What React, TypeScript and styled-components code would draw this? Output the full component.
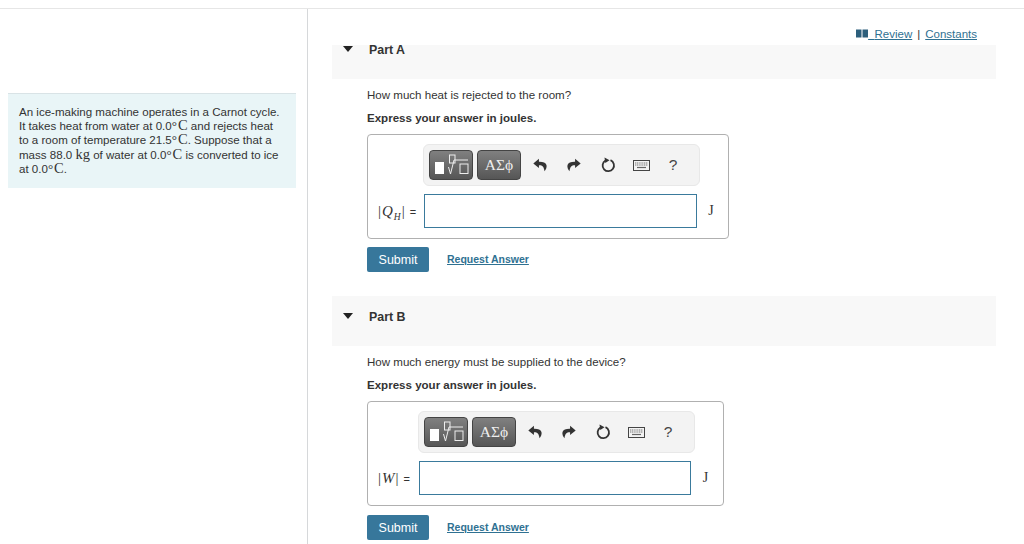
import React from 'react';
import styled, { createGlobalStyle } from 'styled-components';

const GlobalStyle = createGlobalStyle`
    html, body {
        margin: 0;
        padding: 0;
        background: #fff;
        overflow: hidden;
    }
    body {
        font-family: "Liberation Sans", Arial, sans-serif;
        color: #333;
    }
`;

const Page = styled.div`
    width: 1024px;
    height: 544px;
    overflow: hidden;
    display: flex;
    flex-direction: column;
`;
const TopStrip = styled.div`
    height: 8px;
    flex: none;
    border-bottom: 1px solid #e6e6e6;
`;
const Columns = styled.div`
    display: flex;
    flex: 1;
    min-height: 0;
`;

/////////////////////

const LeftColumn = styled.div`
    width: 299px;
    flex: none;
    padding: 84px 0 0 8px;
    border-right: 1px solid #d6d8da;
`;
const InfoPanel = styled.div`
    width: 288px;
    height: 95px;
    box-sizing: border-box;
    padding: 11px 11px 0;
    background: #e9f5f7;
    border-top: 1px solid #d9e3e6;
    font-size: 11.55px;
    line-height: 14.2px;
    color: #333;
`;
const MathText = styled.span`
    font-family: "Liberation Serif", "DejaVu Serif", serif;
    font-size: 14.5px;
    line-height: 0;
`;
const Degree = styled.span`
    font-family: "Liberation Serif", "DejaVu Serif", serif;
    font-size: 13px;
    line-height: 0;
    margin-right: 1px;
`;

/////////////////////

const RightColumn = styled.div`
    width: 664px;
    flex: none;
    margin-left: 24px;
`;
const TopLinks = styled.div`
    height: 36px;
    display: flex;
    justify-content: flex-end;
    align-items: center;
    padding: 14px 19px 0 0;
    box-sizing: border-box;
    font-size: 11.5px;
    color: #333;
    gap: 5px;
`;
const TopLink = styled.a`
    color: #2f7192;
    text-decoration: underline;
    white-space: pre;
`;
const PartHeader = styled.div<{ $height: number; $pad: number }>`
    height: ${p => p.$height}px;
    box-sizing: border-box;
    background: #f8f8f8;
    display: flex;
    align-items: flex-start;
    padding: ${p => p.$pad}px 0 0 11px;
    gap: 16px;
    font-size: 12.4px;
    font-weight: bold;
    line-height: 10px;
    color: #333;
`;
const Caret = styled.span`
    width: 0;
    height: 0;
    margin-top: 1px;
    border-left: 5.5px solid transparent;
    border-right: 5.5px solid transparent;
    border-top: 6px solid #222;
`;
const PartBody = styled.div<{ $bottom: number }>`
    padding: 9px 0 ${p => p.$bottom}px 35px;
`;
const Question = styled.div`
    font-size: 11.55px;
    line-height: 14px;
    color: #333;
    margin-bottom: 9px;
`;
const Instruction = styled.div`
    font-size: 11.55px;
    font-weight: bold;
    line-height: 14px;
    color: #333;
    margin-bottom: 9px;
`;
const AnswerBox = styled.div<{ $width: number; $labelWidth: number; $inputWidth: number }>`
    width: ${p => p.$width}px;
    height: 105px;
    box-sizing: border-box;
    border: 1px solid #b0b0b0;
    border-radius: 4px;
    padding: 9px 0 0 10px;
    display: grid;
    grid-template-columns: ${p => p.$labelWidth}px ${p => p.$inputWidth}px 1fr;
    grid-template-rows: 42px 34px;
    row-gap: 8px;
    align-items: center;
`;
const Toolbar = styled.div`
    grid-column: 2 / 4;
    grid-row: 1;
    width: 277px;
    height: 42px;
    box-sizing: border-box;
    margin-left: -1px;
    padding: 5px 0 0 5px;
    background: #f3f3f3;
    border: 1px solid #e8e8e8;
    border-radius: 6px;
    display: flex;
    align-items: flex-start;
`;
const PaletteButton = styled.div`
    width: 44px;
    height: 30px;
    box-sizing: border-box;
    margin-right: 4px;
    border: 1px solid #444;
    border-radius: 4px;
    background: linear-gradient(#808080, #565656);
    color: #eee;
    display: flex;
    align-items: center;
    justify-content: center;
    font-family: "Liberation Serif", "DejaVu Serif", serif;
    font-size: 15.5px;
`;
const ToolIcon = styled.div<{ $width: number }>`
    width: ${p => p.$width}px;
    height: 30px;
    flex: none;
    display: flex;
    align-items: center;
    justify-content: center;
    font-size: 15.5px;
    color: #444;
`;
const AnswerLabel = styled.div`
    grid-column: 1;
    grid-row: 2;
    display: flex;
    align-items: baseline;
    font-size: 11px;
    color: #333;
`;
const LabelMath = styled.span`
    font-family: "Liberation Serif", "DejaVu Serif", serif;
    font-size: 15px;
    letter-spacing: 1px;
    margin-right: 4px;
`;
const MathVar = styled.i`
    font-family: "Liberation Serif", "DejaVu Serif", serif;
`;
const MathSub = styled.sub`
    font-size: 9.5px;
    line-height: 0;
    font-style: italic;
`;
const AnswerInput = styled.input`
    grid-column: 2;
    grid-row: 2;
    width: 100%;
    height: 34px;
    box-sizing: border-box;
    border: 1px solid #3a7a9c;
    background: #fff;
    padding: 0;
    outline: none;
`;
const Unit = styled.div`
    grid-column: 3;
    grid-row: 2;
    text-align: center;
    padding-right: 3px;
    font-family: "Liberation Serif", "DejaVu Serif", serif;
    font-size: 14px;
    color: #333;
`;
const ActionRow = styled.div<{ $top: number }>`
    display: flex;
    align-items: center;
    gap: 18px;
    margin-top: ${p => p.$top}px;
`;
const SubmitButton = styled.button`
    width: 62px;
    height: 25px;
    border: 0;
    border-radius: 2px;
    padding: 0;
    background: #37779b;
    color: #fff;
    font-family: "Liberation Sans", Arial, sans-serif;
    font-size: 12.5px;
`;
const RequestLink = styled.a`
    color: #2f7192;
    font-size: 10.5px;
    font-weight: bold;
    text-decoration: underline;
    padding-bottom: 2px;
`;

/////////////////////

const BookIcon = () => (
    <svg width="12" height="9" viewBox="0 0 12 9">
        <path d="M0 .5h5.500v8H0zM6.500 .5H12v8H6.500z" fill="#2c5f7c" />
    </svg>
);

const TemplateIcon = () => (
    <svg width="36" height="26" viewBox="0 0 36 26">
        <rect x="2" y="10" width="9" height="12" fill="#fff" />
        <rect x="16.500" y="3" width="5.500" height="8" fill="none" stroke="#eee" />
        <path d="M15.500 15l2 7 3.500-14h14" fill="none" stroke="#eee" />
        <rect x="27" y="12" width="8" height="9.500" fill="none" stroke="#eee" />
    </svg>
);

const UndoIcon = () => (
    <svg width="14" height="14" viewBox="0 0 13 13">
        <path d="M5.500.8L.3 5.200l5.200 4.200V6.800c2.800-.2 4.600.9 5.200 5.600 1.500-2 2.300-3.900 1.800-5.900C11.900 4.100 9 3.400 5.500 3.500z" fill="#333" />
    </svg>
);

const RedoIcon = () => (
    <svg width="14" height="14" viewBox="0 0 13 13">
        <path d="M7.500.8l5.200 4.400-5.200 4.200V6.800c-2.800-.2-4.600.9-5.200 5.600C.8 10.400 0 8.500.5 6.500 1.100 4.100 4 3.400 7.500 3.500z" fill="#333" />
    </svg>
);

const ResetIcon = () => (
    <svg width="15" height="16" viewBox="0 0 15 16">
        <path d="M9.500 3.200a5.700 5.700 0 1 1-5 .3" fill="none" stroke="#333" strokeWidth="1.800" />
        <path d="M3.500 .6l5 2.700-4.200 2.600z" fill="#333" />
    </svg>
);

const KeyboardIcon = () => (
    <svg width="17" height="11" viewBox="0 0 17 11">
        <rect x=".5" y=".5" width="16" height="10" fill="#f3f3f3" stroke="#444" />
        <path d="M2 3h13M2 5h13" stroke="#777" strokeWidth="1.200" strokeDasharray="1.200 .6" />
        <path d="M4 7.500h9" stroke="#666" strokeWidth="1.200" />
    </svg>
);

interface IPartProps {
    question: string,
    label: React.ReactNode,
    boxWidth: number,
    labelWidth: number,
    inputWidth: number,
    actionTop: number,
    bottom: number
}

const PartContent: React.FC<IPartProps> = ({ question, label, boxWidth, labelWidth, inputWidth, actionTop, bottom }) => {
    return (
        <PartBody $bottom={bottom}>
            <Question>{question}</Question>
            <Instruction>Express your answer in joules.</Instruction>
            <AnswerBox $width={boxWidth} $labelWidth={labelWidth} $inputWidth={inputWidth}>
                <Toolbar>
                    <PaletteButton><TemplateIcon /></PaletteButton>
                    <PaletteButton>ΑΣϕ</PaletteButton>
                    <ToolIcon $width={29}><UndoIcon /></ToolIcon>
                    <ToolIcon $width={40}><RedoIcon /></ToolIcon>
                    <ToolIcon $width={28}><ResetIcon /></ToolIcon>
                    <ToolIcon $width={38}><KeyboardIcon /></ToolIcon>
                    <ToolIcon $width={26}>?</ToolIcon>
                </Toolbar>
                <AnswerLabel>{label}</AnswerLabel>
                <AnswerInput type="text" readOnly />
                <Unit>J</Unit>
            </AnswerBox>
            <ActionRow $top={actionTop}>
                <SubmitButton>Submit</SubmitButton>
                <RequestLink>Request Answer</RequestLink>
            </ActionRow>
        </PartBody>
    );
};

const Celsius = ({ value }: { value: string }) => (
    <>{value}<Degree>°</Degree><MathText>C</MathText></>
);

const App: React.FC = () => {
    return (
        <Page>
            <GlobalStyle />
            <TopStrip />
            <Columns>
                <LeftColumn>
                    <InfoPanel>
                        An ice-making machine operates in a Carnot cycle.<br />
                        It takes heat from water at <Celsius value="0.0" /> and rejects heat<br />
                        to a room of temperature <Celsius value="21.5" />. Suppose that a<br />
                        mass 88.0 <MathText>kg</MathText> of water at <Celsius value="0.0" /> is converted to ice<br />
                        at <Celsius value="0.0" />.
                    </InfoPanel>
                </LeftColumn>
                <RightColumn>
                    <TopLinks>
                        <TopLink><BookIcon />{'  '}Review</TopLink>
                        <span>|</span>
                        <TopLink>Constants</TopLink>
                    </TopLinks>
                    <PartHeader $height={34} $pad={0}>
                        <Caret />
                        Part A
                    </PartHeader>
                    <PartContent
                        question="How much heat is rejected to the room?"
                        label={<><LabelMath>|<MathVar>Q</MathVar><MathSub>H</MathSub>|</LabelMath>=</>}
                        boxWidth={362}
                        labelWidth={46}
                        inputWidth={273}
                        actionTop={8}
                        bottom={24}
                    />
                    <PartHeader $height={50} $pad={16}>
                        <Caret />
                        Part B
                    </PartHeader>
                    <PartContent
                        question="How much energy must be supplied to the device?"
                        label={<><LabelMath>|<MathVar>W</MathVar>|</LabelMath>=</>}
                        boxWidth={357}
                        labelWidth={41}
                        inputWidth={272}
                        actionTop={9}
                        bottom={0}
                    />
                </RightColumn>
            </Columns>
        </Page>
    );
};

export default App;
